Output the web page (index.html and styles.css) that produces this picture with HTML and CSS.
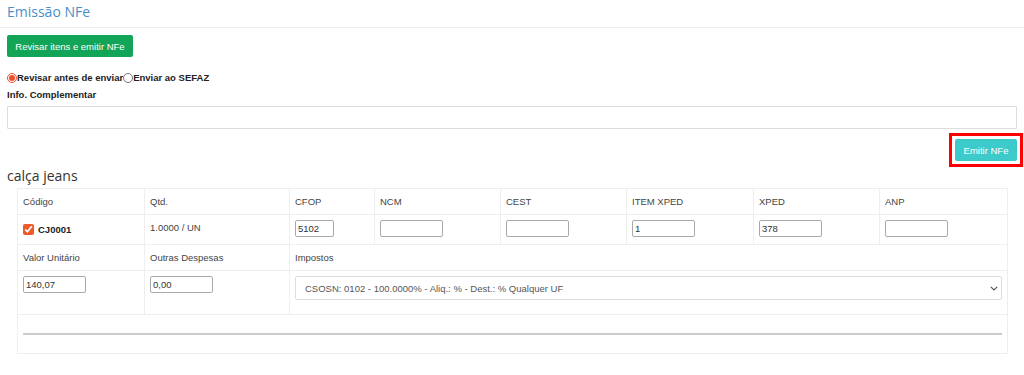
FILE: index.html
```html
<!DOCTYPE html>
<html lang="pt-BR">
<head>
<meta charset="utf-8">
<title>Emissão NFe</title>
<link rel="stylesheet" href="styles.css">
</head>
<body>
<div class="page">
  <h1 class="title">Emissão NFe</h1>
  <button class="btn btn-green" type="button">Revisar itens e emitir NFe</button>

  <div class="radios">
    <label class="radio"><input type="radio" name="modo" checked>Revisar antes de enviar</label>
    <label class="radio"><input type="radio" name="modo">Enviar ao SEFAZ</label>
  </div>

  <label class="field-label">Info. Complementar</label>
  <input class="text-full" type="text">

  <div class="actions">
    <span class="highlight"><button class="btn btn-teal" type="button">Emitir NFe</button></span>
  </div>

  <h2 class="item-title">calça jeans</h2>

  <table class="items">
    <colgroup>
      <col class="c1"><col class="c2"><col class="c3"><col class="c4">
      <col class="c5"><col class="c6"><col class="c7"><col class="c8">
    </colgroup>
    <tr class="head">
      <td>Código</td><td>Qtd.</td><td>CFOP</td><td>NCM</td>
      <td>CEST</td><td>ITEM XPED</td><td>XPED</td><td>ANP</td>
    </tr>
    <tr class="data">
      <td><label class="code"><input type="checkbox" checked>CJ0001</label></td>
      <td>1.0000 / UN</td>
      <td><input class="small narrow" type="text" value="5102"></td>
      <td><input class="small" type="text"></td>
      <td><input class="small" type="text"></td>
      <td><input class="small" type="text" value="1"></td>
      <td><input class="small" type="text" value="378"></td>
      <td><input class="small" type="text"></td>
    </tr>
    <tr class="head">
      <td>Valor Unitário</td><td>Outras Despesas</td><td colspan="6">Impostos</td>
    </tr>
    <tr class="data tall">
      <td><input class="small" type="text" value="140,07"></td>
      <td><input class="small" type="text" value="0,00"></td>
      <td colspan="6">
        <div class="select-wrap">
          <select class="select">
            <option>CSOSN: 0102 - 100.0000% - Aliq.: % - Dest.: % Qualquer UF</option>
          </select>
          <svg class="chev" width="8" height="5" viewBox="0 0 8 5" aria-hidden="true">
            <path d="M0.8 0.8 L4 4 L7.2 0.8" fill="none" stroke="#555" stroke-width="1.2"/>
          </svg>
        </div>
      </td>
    </tr>
    <tr class="sep">
      <td colspan="8"><hr class="rule"></td>
    </tr>
  </table>
</div>
</body>
</html>
```

FILE: styles.css
```css
* { box-sizing: border-box; }

body {
  margin: 0;
  background: #ffffff;
  font-family: "Liberation Sans", Arial, sans-serif;
  font-size: 9.5px;
  color: #333;
}

.page {
  padding: 0 7px;
}

.title {
  margin: 0 -7px;
  height: 28px;
  padding: 3px 0 0 7px;
  font-family: "Open Sans", "Noto Sans", sans-serif;
  font-size: 14px;
  font-weight: 400;
  line-height: 18px;
  color: #4a8fc8;
  border-bottom: 1px solid #eeeeee;
}

.btn {
  display: block;
  border: 0;
  border-radius: 2px;
  font-family: "Liberation Sans", Arial, sans-serif;
  font-size: 9.5px;
  color: #ffffff;
  height: 22px;
  padding: 0;
  white-space: nowrap;
  cursor: pointer;
}

.btn-green {
  margin-top: 7px;
  background: #12a557;
  width: 126px;
}

.radios {
  display: flex;
  margin-top: 15px;
  font-weight: 700;
  color: #222;
  line-height: 12px;
}

.radio {
  display: flex;
  align-items: center;
}

.radio input {
  margin: 0;
  width: 10px;
  height: 10px;
  accent-color: #f0502a;
}

.field-label {
  display: block;
  margin-top: 4px;
  font-weight: 700;
  color: #222;
  line-height: 14px;
}

.text-full {
  display: block;
  margin-top: 4px;
  width: 100%;
  height: 23px;
  border: 1px solid #dddddd;
  border-radius: 1px;
}

.actions {
  display: flex;
  justify-content: flex-end;
  margin-top: 4px;
  margin-right: -6px;
}

.highlight {
  display: block;
  border: 3px solid #ff0000;
  padding: 3px;
}

.btn-teal {
  background: #3ccbca;
  width: 62px;
}

.item-title {
  margin: 0 0 4px;
  font-family: "Open Sans", "Noto Sans", sans-serif;
  font-size: 14px;
  font-weight: 400;
  line-height: 17px;
  color: #333;
}

.items {
  margin: 0 0 0 10px;
  width: 990px;
  border-collapse: collapse;
  table-layout: fixed;
}

.c1 { width: 127px; }
.c2 { width: 145px; }
.c3 { width: 85px; }
.c4 { width: 126px; }
.c5 { width: 126px; }
.c6 { width: 127px; }
.c7 { width: 126px; }
.c8 { width: 128px; }

.items td {
  border: 1px solid #eeeeee;
  padding: 5px;
  line-height: 15px;
  color: #444;
  vertical-align: top;
}

.head td {
  height: 25px;
  vertical-align: middle;
}

.data td {
  height: 30px;
}

.data.tall td {
  height: 44px;
}

.code {
  display: flex;
  align-items: center;
  margin-top: 2px;
  font-weight: 700;
  color: #222;
}

.code input {
  margin: 0 4px 0 0;
  width: 11px;
  height: 11px;
  accent-color: #f0582a;
}

.small {
  display: block;
  width: 63px;
  height: 17px;
  margin: 0;
  padding: 0 2px;
  border: 1px solid #a9a9a9;
  border-radius: 2px;
  font-family: "Liberation Sans", Arial, sans-serif;
  font-size: 9.5px;
  color: #333;
}

.narrow { width: 39px; }

.select-wrap {
  position: relative;
}

.select {
  display: block;
  width: 100%;
  height: 24px;
  padding: 0 0 0 9px;
  border: 1px solid #dddddd;
  border-radius: 2px;
  background: #ffffff;
  -webkit-appearance: none;
  appearance: none;
  font-family: "Liberation Sans", Arial, sans-serif;
  font-size: 9.5px;
  color: #555;
}

.chev {
  position: absolute;
  right: 4px;
  top: 10px;
}

.sep td {
  height: 39px;
  vertical-align: top;
  padding-top: 18px;
}

.rule {
  margin: 0;
  border: 0;
  height: 2px;
  background: #cccccc;
}
```
